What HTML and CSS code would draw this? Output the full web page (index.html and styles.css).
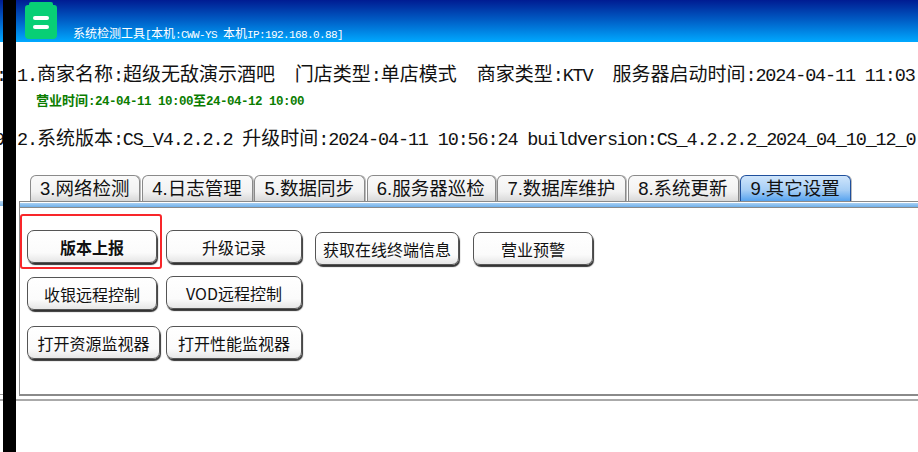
FILE: index.html
```html
<!DOCTYPE html>
<html>
<head>
<title>系统检测工具</title>
<meta charset='utf-8'/>
<link rel="stylesheet" href="styles.css">
</head>
<body>
<div class="blackBar"></div>

<div class="header">
	<svg class="logo" width="32" height="37" viewBox="0 0 32 37">
		<path d="M6 0H26Q28 0 28 2V3H29Q32 3 32 6V33Q32 37 28 37H4Q0 37 0 33V6Q0 3 3 3H4V2Q4 0 6 0Z" fill="#08cf76"/>
		<rect x="8" y="14" width="16" height="4" rx="2" fill="#fff"/>
		<rect x="8" y="23" width="16" height="4" rx="2" fill="#fff"/>
	</svg>
	<div class="title"><span class="cn">系统检测工具</span>[<span class="cn">本机</span>:CWW-YS <span class="cn">本机</span>IP:192.168.0.88]</div>
</div>

<div class="info row1"><span class="cut">:</span>1.<span class="cn">商家名称</span>:<span class="cn">超级无敌演示酒吧</span>&nbsp;&nbsp;<span class="cn">门店类型</span>:<span class="cn">单店模式</span>&nbsp;&nbsp;<span class="cn">商家类型</span>:KTV&nbsp;&nbsp;<span class="cn">服务器启动时间</span>:2024-04-11 11:03</div>
<div class="bizTime"><span class="cn">营业时间</span>:24-04-11 10:00<span class="cn">至</span>24-04-12 10:00</div>
<div class="info row2"><span class="cut nine">9</span>2.<span class="cn">系统版本</span>:CS_V4.2.2.2 <span class="cn">升级时间</span>:2024-04-11 10:56:24 buildversion:CS_4.2.2.2_2024_04_10_12_0</div>

<div class="tabs">
	<div class="tab">3.网络检测</div>
	<div class="tab">4.日志管理</div>
	<div class="tab">5.数据同步</div>
	<div class="tab">6.服务器巡检</div>
	<div class="tab">7.数据库维护</div>
	<div class="tab">8.系统更新</div>
	<div class="tab active">9.其它设置</div>
</div>

<div class="panelRow">
	<div class="sliver"></div>
	<div class="panel">
		<div class="band"></div>
		<div class="marker"></div>
		<div class="btnRow first">
			<button class="btn w130 strong">版本上报</button>
			<button class="btn w136">升级记录</button>
			<button class="btn w144 low">获取在线终端信息</button>
			<button class="btn w120 low">营业预警</button>
		</div>
		<div class="btnRow second">
			<button class="btn w130 low1">收银远程控制</button>
			<button class="btn w136">VOD远程控制</button>
		</div>
		<div class="btnRow third">
			<button class="btn w133">打开资源监视器</button>
			<button class="btn w136">打开性能监视器</button>
		</div>
	</div>
</div>
<div class="footLine"></div>
</body>
</html>
```

FILE: styles.css
```css
html, body {
	margin: 0;
	padding: 0;
	background: #fff;
}
body {
	position: relative;
	width: 918px;
	height: 452px;
	overflow: hidden;
	font-family: "Liberation Mono", "Noto Sans CJK SC", monospace;
	color: #111;
}
.blackBar {
	position: absolute;
	top: 0;
	left: 3px;
	width: 13px;
	height: 452px;
	background: #000;
	z-index: 2;
}
.cn {
	font-family: "Noto Sans CJK SC", sans-serif;
	letter-spacing: 0;
}

/* 顶部标题栏 */
.header {
	display: flex;
	height: 42px;
	background: linear-gradient(#001c92, #0060c8 50%, #00a9ff);
}
.logo {
	margin: 2px 0 0 25px;
}
.title {
	height: 16px;
	margin: 25px 0 0 16px;
	color: #fff;
	font-size: 11px;
	letter-spacing: -0.6px;
	line-height: 16px;
	white-space: nowrap;
}
.title .cn {
	font-size: 12px;
}

/* 商家信息 */
.info {
	height: 24px;
	font-size: 18.5px;
	letter-spacing: -1.15px;
	line-height: 24px;
	white-space: nowrap;
	overflow: hidden;
}
.info .cn {
	font-size: 19px;
}
.row1 {
	margin-top: 19px;
}
.row2 {
	margin-top: 17px;
}
.cut {
	display: inline-block;
	width: 17px;
	text-indent: -4px;
}
.cut.nine {
	text-indent: -6px;
}
.bizTime {
	height: 16px;
	margin: 7px 0 0 36px;
	color: #0a7d00;
	font-size: 12.5px;
	font-weight: bold;
	letter-spacing: -0.5px;
	line-height: 16px;
	white-space: nowrap;
}
.bizTime .cn {
	font-size: 13px;
}

/* 选项卡 */
.tabs {
	display: flex;
	gap: 1.8px;
	height: 26px;
	margin: 26px 0 0 30px;
}
.tab {
	height: 26px;
	padding: 0 10px 0 9px;
	border: 1px solid #8a8a8a;
	border-bottom: 0;
	border-radius: 6px 6px 0 0;
	background: linear-gradient(#fafafa, #f2f2f2 60%, #d6d6d6);
	box-shadow: 1px 0 0 #bbb;
	color: #111;
	font-family: "Liberation Sans", "Noto Sans CJK SC", sans-serif;
	font-size: 18.5px;
	line-height: 26px;
	white-space: nowrap;
}
.tab.active {
	border-color: #1f4f9c;
	background: linear-gradient(#cfe5fb, #a5cdf5 55%, #4f9fee);
}

/* 面板 */
.panelRow {
	display: flex;
	height: 195px;
}
.sliver {
	width: 3px;
	height: 193px;
	margin-right: 16px;
	background: linear-gradient(#b5d3ee, #7fb7e8) top / 3px 5px no-repeat;
	border-bottom: 1px solid #999;
}
.panel {
	position: relative;
	flex: 1;
	border: 1px solid #8a8a8a;
	border-right: 0;
	border-bottom-width: 2px;
}
.band {
	height: 4px;
	margin-top: 1px;
	background: linear-gradient(#a9d0f3, #6fb0ea);
	border-bottom: 1px solid #8a8a8a;
}
.marker {
	position: absolute;
	top: 12px;
	left: 0;
	width: 138px;
	height: 51px;
	border: 2px solid #f8262a;
	border-radius: 3px;
}
.btnRow {
	display: flex;
	align-items: flex-start;
	padding-left: 7px;
}
.btnRow.first {
	margin-top: 22px;
	height: 46px;
}
.btnRow.second {
	height: 50px;
}
.btn {
	height: 33px;
	margin: 0 9px 0 0;
	padding: 0;
	border: 1px solid #555;
	border-radius: 7px;
	background: linear-gradient(#fff, #fbfbfb 70%, #e6e6e6);
	box-shadow: 1px 2px 1px #333;
	color: #111;
	font-family: "Noto Sans CJK SC", sans-serif;
	font-size: 16px;
	line-height: 1;
}
.btn.strong {
	font-weight: bold;
}
.btn.low {
	margin: 2px 10px 0 4px;
}
.btn.low1 {
	margin-top: 1px;
}
.w120 { width: 120px; }
.w130 { width: 130px; }
.w133 { width: 133px; margin-right: 6px; }
.w136 { width: 136px; }
.w144 { width: 144px; }

.footLine {
	height: 2px;
	margin-top: 3px;
	background: #aaa;
}
```
